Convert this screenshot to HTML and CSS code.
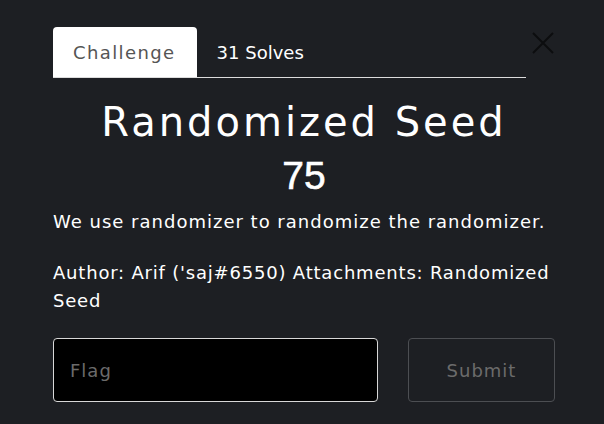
FILE: index.html
```html
<!DOCTYPE html>
<html>
<head>
<meta charset="utf-8">
<link rel="stylesheet" href="styles.css">
</head>
<body>
<div class="modal">
  <div class="header">
    <ul class="tabs">
      <li class="tab active">Challenge</li>
      <li class="tab">31 Solves</li>
    </ul>
    <button class="close" aria-label="Close">
      <svg width="22" height="22" viewBox="0 0 22 22"><path d="M1 1 L21 21 M21 1 L1 21" stroke="#0c0d0f" stroke-width="2" fill="none"/></svg>
    </button>
  </div>
  <h1 class="title">Randomized Seed</h1>
  <div class="value">75</div>
  <p class="desc">We use randomizer to randomize the randomizer.</p>
  <p class="desc meta">Author: Arif ('saj#6550) Attachments: Randomized Seed</p>
  <div class="form">
    <input class="flag" type="text" placeholder="Flag">
    <button class="submit">Submit</button>
  </div>
</div>
</body>
</html>
```
FILE: styles.css
```css
html, body {
  margin: 0;
  padding: 0;
  background: #1d1f23;
  width: 604px;
  height: 424px;
  overflow: hidden;
}
.modal {
  box-sizing: border-box;
  width: 604px;
  padding: 27px 49px 0 53px;
  font-family: "DejaVu Sans", sans-serif;
  color: #ffffff;
}
.header {
  display: flex;
  align-items: flex-start;
}
.tabs {
  list-style: none;
  margin: 0;
  padding: 0;
  display: flex;
  width: 473px;
  border-bottom: 1px solid #dcdcdc;
}
.tab {
  height: 50px;
  box-sizing: border-box;
  padding: 0 21px 0 20px;
  display: flex;
  align-items: center;
  font-size: 18px;
  color: #ffffff;
  letter-spacing: 0;
}
.tab.active {
  background: #ffffff;
  color: #555555;
  border-radius: 4px 4px 0 0;
  letter-spacing: 1.4px;
}
.close {
  margin: 5px 0 0 6px;
  padding: 0;
  background: none;
  border: none;
  width: 22px;
  height: 22px;
}
.title {
  margin: 20px 0 0 0;
  text-align: center;
  font-weight: 400;
  font-size: 40px;
  line-height: 48px;
  letter-spacing: 3px;
}
.value {
  text-align: center;
  font-family: "Liberation Sans", sans-serif;
  font-size: 39px;
  font-weight: 400;
  -webkit-text-stroke: 0.6px #ffffff;
  line-height: 42px;
  margin-top: 9px;
}
.desc {
  margin: 11px 0 0 0;
  font-size: 18px;
  line-height: 28px;
  letter-spacing: 1px;
}
.meta {
  margin-top: 23px;
  letter-spacing: 0.8px;
}
.form {
  display: flex;
  margin-top: 23px;
  gap: 30px;
}
.flag {
  box-sizing: border-box;
  width: 325px;
  height: 64px;
  background: #000000;
  border: 1px solid #d8d8d8;
  border-radius: 4px;
  padding: 0 16px;
  font-family: "DejaVu Sans", sans-serif;
  font-size: 18px;
  letter-spacing: 1px;
  color: #ffffff;
  outline: none;
}
.flag::placeholder {
  color: #6b6b6b;
}
.submit {
  box-sizing: border-box;
  width: 147px;
  height: 64px;
  background: transparent;
  border: 1px solid #4c4e52;
  border-radius: 4px;
  font-family: "DejaVu Sans", sans-serif;
  font-size: 18px;
  letter-spacing: 1px;
  color: #6b6b6b;
}
```
